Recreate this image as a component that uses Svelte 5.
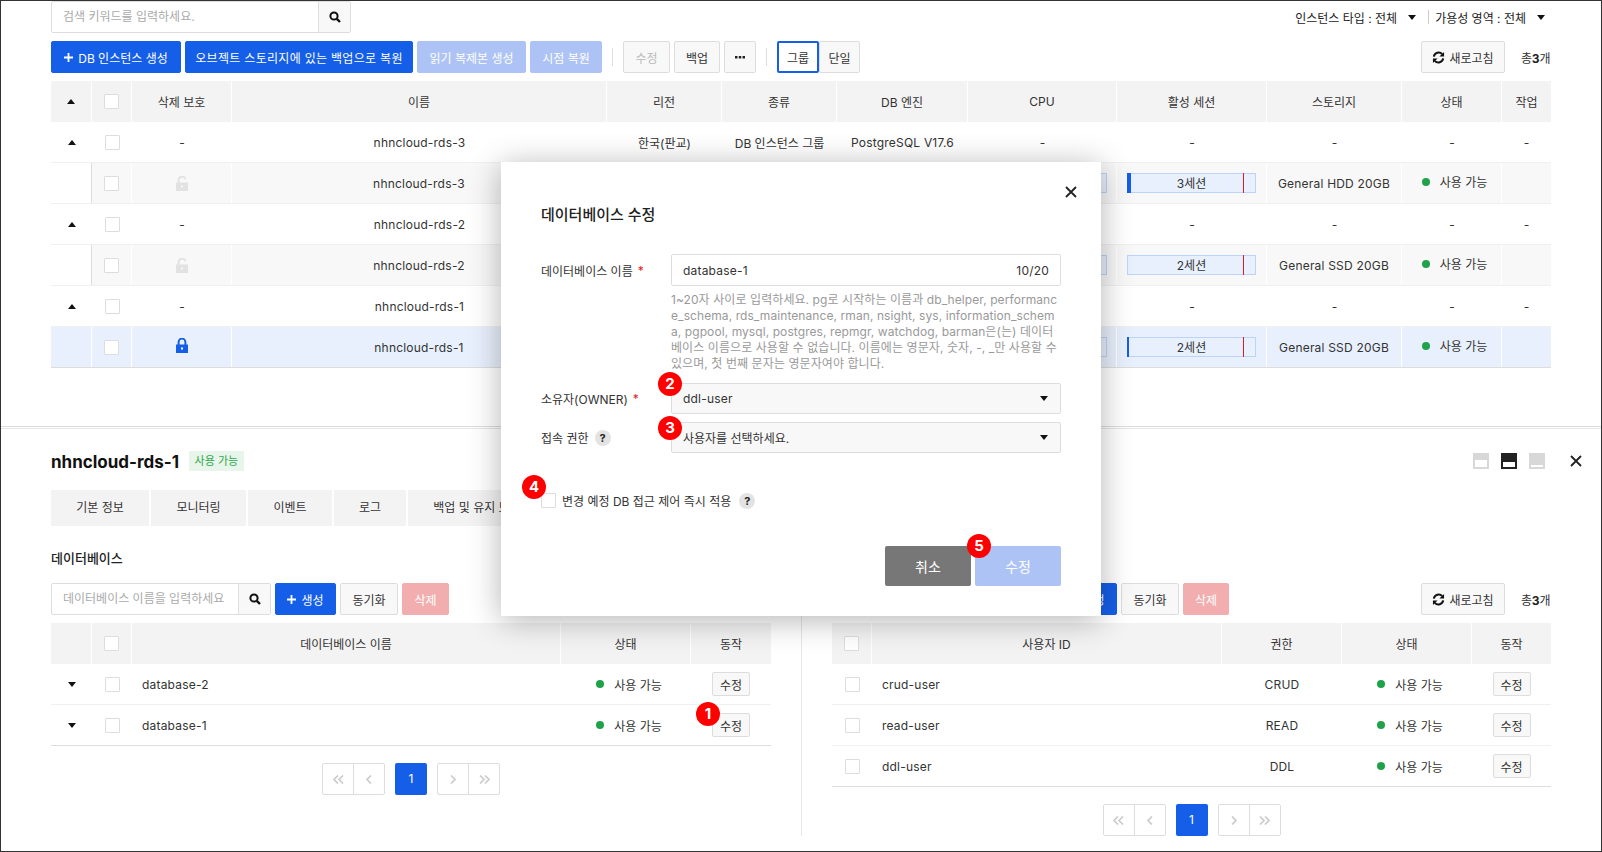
<script>
	const instances = [
		{ name: 'nhncloud-rds-3', disk: 'General HDD 20GB', cpu: 12, used: 4, sessions: '3세션', selected: false },
		{ name: 'nhncloud-rds-2', disk: 'General SSD 20GB', cpu: 8, used: 0, sessions: '2세션', selected: false },
		{ name: 'nhncloud-rds-1', disk: 'General SSD 20GB', cpu: 10, used: 2, sessions: '2세션', selected: true }
	]
	const tabs = ['기본 정보', '모니터링', '이벤트', '로그', '백업 및 유지 보수']
	const databases = ['database-2', 'database-1']
	const users = [
		{ id: 'crud-user', role: 'CRUD' },
		{ id: 'read-user', role: 'READ' },
		{ id: 'ddl-user', role: 'DDL' }
	]
	const marks = [
		{ n: 1, x: 708, y: 714 },
		{ n: 2, x: 670, y: 384 },
		{ n: 3, x: 670, y: 428 },
		{ n: 4, x: 534, y: 487 },
		{ n: 5, x: 979, y: 546 }
	]
</script>

{#snippet search()}
	<svg width="12" height="12" viewBox="0 0 12 12" fill="none">
		<circle cx="5" cy="5" r="3.6" stroke="#111" stroke-width="2" />
		<path d="M7.8 7.8 11 11" stroke="#111" stroke-width="2.4" />
	</svg>
{/snippet}

{#snippet refresh()}
	<svg width="13" height="13" viewBox="0 0 14 14" fill="none">
		<path d="M2 6a5.2 5.2 0 0 1 9-2.6" stroke="#111" stroke-width="2.2" />
		<path d="M13 1v5H8z" fill="#111" />
		<path d="M12 8a5.2 5.2 0 0 1-9 2.6" stroke="#111" stroke-width="2.2" />
		<path d="M1 13V8h5z" fill="#111" />
	</svg>
{/snippet}

{#snippet plus()}
	<svg width="9" height="9" viewBox="0 0 9 9"><path d="M3.6 0h1.8v3.600H9v1.800H5.400V9H3.600V5.400H0V3.600h3.600z" fill="#fff" /></svg>
{/snippet}

{#snippet close()}
	<svg width="12" height="12" viewBox="0 0 12 12"><path d="M1 1l10 10M11 1 1 11" stroke="#222" stroke-width="1.8" /></svg>
{/snippet}

{#snippet lock(open)}
	<svg width="12" height="15" viewBox="0 0 12 15" fill="none">
		{#if open}
			<path d="M2.600 7V4a3.400 3.400 0 0 1 6.700-.8" stroke="#e2e2e2" stroke-width="2" />
			<path d="M0 6.500h12V15H0z" fill="#e2e2e2" />
			<path d="M5 9.500h2v2H5z" fill="#f8f8f8" />
		{:else}
			<path d="M2.600 7V4a3.400 3.400 0 0 1 6.800 0v3" stroke="#155ee8" stroke-width="2" />
			<path d="M0 6.500h12V15H0z" fill="#155ee8" />
			<path d="M5 9.500h2v2H5z" fill="#fff" />
		{/if}
	</svg>
{/snippet}

{#snippet pager()}
	<div class="pager">
		<div class="pgroup">
			<span class="pbtn"><svg width="11" height="9" viewBox="0 0 11 9" fill="none"><path d="M5 .5 1 4.500l4 4M10 .5 6 4.500l4 4" stroke="#ccc" stroke-width="1.700" /></svg></span>
			<span class="pbtn"><svg width="6" height="9" viewBox="0 0 6 9" fill="none"><path d="M5 .5 1 4.500l4 4" stroke="#ccc" stroke-width="1.700" /></svg></span>
		</div>
		<span class="pcur">1</span>
		<div class="pgroup">
			<span class="pbtn"><svg width="6" height="9" viewBox="0 0 6 9" fill="none"><path d="M1 .5l4 4-4 4" stroke="#ccc" stroke-width="1.700" /></svg></span>
			<span class="pbtn"><svg width="11" height="9" viewBox="0 0 11 9" fill="none"><path d="M1 .5l4 4-4 4M6 .5l4 4-4 4" stroke="#ccc" stroke-width="1.700" /></svg></span>
		</div>
	</div>
{/snippet}

{#snippet status()}
	<span class="status"><i></i>사용 가능</span>
{/snippet}

{#snippet bar(used, label)}
	<div class="bar">
		{#if used}<i style="width: {used}px"></i>{/if}
		<b></b>
		{label}
	</div>
{/snippet}

<div class="page">
	<section class="top">
		<div class="filters">
			<div class="search wide">
				<span class="ph">검색 키워드를 입력하세요.</span>
				<span class="sbtn">{@render search()}</span>
			</div>
			<div class="selects">
				<span class="flt">인스턴스 타입 : 전체</span><i class="down flt-arrow"></i>
				<span class="flt-sep"></span>
				<span class="flt">가용성 영역 : 전체</span><i class="down flt-arrow"></i>
			</div>
		</div>

		<div class="toolbar">
			<button class="btn blue w130">{@render plus()} DB 인스턴스 생성</button>
			<button class="btn blue w228">오브젝트 스토리지에 있는 백업으로 복원</button>
			<button class="btn faded w109">읽기 복제본 생성</button>
			<button class="btn faded w72">시점 복원</button>
			<span class="vsep"></span>
			<button class="btn off w47">수정</button>
			<button class="btn w46">백업</button>
			<button class="btn w32" aria-label="더 보기">
				<svg width="10" height="3" viewBox="0 0 10 3"><path d="M0 0h2.500v2.500H0zM3.750 0h2.500v2.500h-2.500zM7.500 0H10v2.500H7.500z" fill="#222" /></svg>
			</button>
			<span class="vsep"></span>
			<button class="btn on w42">그룹</button>
			<button class="btn w41">단일</button>
			<button class="btn refresh">{@render refresh()} 새로고침</button>
			<span class="total">총<b>3</b>개</span>
		</div>

		<div class="table main">
			<div class="row head">
				<div class="cell"><i class="up"></i></div>
				<div class="cell"><span class="check"></span></div>
				<div class="cell">삭제 보호</div>
				<div class="cell">이름</div>
				<div class="cell">리전</div>
				<div class="cell">종류</div>
				<div class="cell">DB 엔진</div>
				<div class="cell">CPU</div>
				<div class="cell">활성 세션</div>
				<div class="cell">스토리지</div>
				<div class="cell">상태</div>
				<div class="cell">작업</div>
			</div>
			{#each instances as inst}
				<div class="row">
					<div class="cell"><i class="up"></i></div>
					<div class="cell"><span class="check"></span></div>
					<div class="cell">-</div>
					<div class="cell lat">{inst.name}</div>
					<div class="cell">한국(판교)</div>
					<div class="cell">DB 인스턴스 그룹</div>
					<div class="cell lat">PostgreSQL V17.6</div>
					<div class="cell">-</div>
					<div class="cell">-</div>
					<div class="cell">-</div>
					<div class="cell">-</div>
					<div class="cell">-</div>
				</div>
				<div class="row child" class:selected={inst.selected}>
					<div class="cell"></div>
					<div class="cell"><span class="check"></span></div>
					<div class="cell" class:raised={inst.selected}>{@render lock(!inst.selected)}</div>
					<div class="cell lat">{inst.name}</div>
					<div class="cell">한국(판교)</div>
					<div class="cell">DB 인스턴스</div>
					<div class="cell lat">PostgreSQL V17.6</div>
					<div class="cell">{@render bar(inst.used, inst.cpu + '%')}</div>
					<div class="cell">{@render bar(inst.used, inst.sessions)}</div>
					<div class="cell lat">{inst.disk}</div>
					<div class="cell raised">{@render status()}</div>
					<div class="cell"></div>
				</div>
			{/each}
		</div>
	</section>

	<div class="split"></div>

	<section class="detail">
		<div class="detail-head">
			<h2>nhncloud-rds-1</h2>
			<span class="badge">사용 가능</span>
			<div class="views">
				<span class="view v1"></span>
				<span class="view v2"></span>
				<span class="view v3"></span>
				<span class="detail-close">{@render close()}</span>
			</div>
		</div>

		<div class="tabs">
			{#each tabs as tab, i}
				<span class="tab t{i}">{tab}</span>
			{/each}
		</div>

		<div class="columns">
			<div class="col left">
				<h3>데이터베이스</h3>
				<div class="toolbar sub">
					<div class="search boxed">
						<span class="ph">데이터베이스 이름을 입력하세요</span>
						<span class="sbtn">{@render search()}</span>
					</div>
					<button class="btn blue w61">{@render plus()} 생성</button>
					<button class="btn w58">동기화</button>
					<button class="btn red w47">삭제</button>
				</div>
				<div class="table dbs">
					<div class="row head">
						<div class="cell"></div>
						<div class="cell"><span class="check"></span></div>
						<div class="cell">데이터베이스 이름</div>
						<div class="cell">상태</div>
						<div class="cell">동작</div>
					</div>
					{#each databases as db}
						<div class="row">
							<div class="cell"><i class="down"></i></div>
							<div class="cell"><span class="check"></span></div>
							<div class="cell start lat">{db}</div>
							<div class="cell">{@render status()}</div>
							<div class="cell"><button class="btn small">수정</button></div>
						</div>
					{/each}
				</div>
				{@render pager()}
			</div>

			<div class="col right">
				<h3>사용자</h3>
				<div class="toolbar sub">
					<div class="search boxed">
						<span class="ph">사용자 ID를 입력하세요</span>
						<span class="sbtn">{@render search()}</span>
					</div>
					<button class="btn blue w61">{@render plus()} 생성</button>
					<button class="btn w58">동기화</button>
					<button class="btn red w46">삭제</button>
					<button class="btn refresh">{@render refresh()} 새로고침</button>
					<span class="total">총<b>3</b>개</span>
				</div>
				<div class="table usrs">
					<div class="row head">
						<div class="cell"><span class="check"></span></div>
						<div class="cell">사용자 ID</div>
						<div class="cell">권한</div>
						<div class="cell">상태</div>
						<div class="cell">동작</div>
					</div>
					{#each users as user}
						<div class="row">
							<div class="cell"><span class="check"></span></div>
							<div class="cell start lat">{user.id}</div>
							<div class="cell lat">{user.role}</div>
							<div class="cell">{@render status()}</div>
							<div class="cell"><button class="btn small">수정</button></div>
						</div>
					{/each}
				</div>
				{@render pager()}
			</div>
		</div>
	</section>

	<div class="modal">
		<span class="modal-close">{@render close()}</span>
		<h1>데이터베이스 수정</h1>
		<div class="form">
			<div class="lbl first">데이터베이스 이름 <em>*</em></div>
			<div>
				<div class="input lat">
					<span>database-1</span>
					<span>10/20</span>
				</div>
				<p class="help">
					1~20자 사이로 입력하세요. pg로 시작하는 이름과 db_helper, performanc<br />
					e_schema, rds_maintenance, rman, nsight, sys, information_schem<br />
					a, pgpool, mysql, postgres, repmgr, watchdog, barman은(는) 데이터<br />
					베이스 이름으로 사용할 수 없습니다. 이름에는 영문자, 숫자, -, _만 사용할 수<br />
					있으며, 첫 번째 문자는 영문자여야 합니다.
				</p>
			</div>
			<div class="lbl">소유자(OWNER) <em>*</em></div>
			<div class="select lat"><span>ddl-user</span><i class="down"></i></div>
			<div class="lbl">접속 권한 <span class="q">?</span></div>
			<div class="select"><span>사용자를 선택하세요.</span><i class="down"></i></div>
		</div>
		<div class="agree">
			<span class="check"></span>
			<span>변경 예정 DB 접근 제어 즉시 적용</span>
			<span class="q">?</span>
		</div>
		<div class="actions">
			<button class="mbtn cancel">취소</button>
			<button class="mbtn save">수정</button>
		</div>
	</div>

	{#each marks as m}
		<span class="mark" style="left: {m.x - 12}px; top: {m.y - 12}px">{m.n}</span>
	{/each}
</div>

<style>
	:global(body) {
		margin: 0;
		background: #fff;
	}
	.page {
		position: relative;
		box-sizing: border-box;
		width: 1602px;
		height: 852px;
		border: 1px solid #333;
		overflow: hidden;
		font-family: Inter, 'Noto Sans CJK KR', sans-serif;
		font-size: 12px;
		color: #333;
	}
	.lat {
		letter-spacing: 0.2px;
	}
	.top {
		height: 425px;
		padding: 0 50px;
		box-sizing: border-box;
	}
	.filters {
		display: flex;
		justify-content: space-between;
		align-items: center;
		height: 32px;
	}
	.search {
		display: flex;
		box-sizing: border-box;
		height: 32px;
		border: 1px solid #ddd;
		border-radius: 2px;
		background: #fff;
	}
	.wide {
		width: 300px;
	}
	.boxed {
		width: 220px;
	}
	.ph {
		flex: 1;
		padding-left: 11px;
		line-height: 30px;
		color: #aaa;
		overflow: hidden;
		white-space: nowrap;
	}
	.sbtn {
		display: flex;
		align-items: center;
		justify-content: center;
		width: 31px;
		border-left: 1px solid #ddd;
		background: #f8f8f8;
	}
	.selects {
		display: flex;
		align-items: center;
		padding-right: 6px;
	}
	.flt {
		color: #222;
	}
	.flt-arrow {
		margin-left: 11px;
	}
	.flt-sep {
		width: 1px;
		height: 14px;
		margin: 0 6px 0 12px;
		background: #ccc;
	}
	.up,
	.down {
		display: block;
		width: 0;
		height: 0;
		border-left: 4px solid transparent;
		border-right: 4px solid transparent;
	}
	.up {
		border-bottom: 5px solid #111;
	}
	.down {
		border-top: 5px solid #111;
	}
	.toolbar {
		display: flex;
		align-items: center;
		gap: 4px;
		height: 32px;
		margin-top: 8px;
	}
	.btn {
		display: inline-flex;
		align-items: center;
		justify-content: center;
		gap: 5px;
		box-sizing: border-box;
		height: 32px;
		padding: 0;
		border: 1px solid #ddd;
		border-radius: 2px;
		background: #f8f8f8;
		color: #333;
		font: inherit;
		white-space: nowrap;
	}
	.blue {
		border-color: #155ee8;
		background: #155ee8;
		color: #fff;
	}
	.faded {
		border-color: #aec3f5;
		background: #aec3f5;
		color: #fff;
	}
	.red {
		border-color: #f2aeae;
		background: #f2aeae;
		color: #fff;
	}
	.off {
		color: #bbb;
	}
	.on {
		border: 2px solid #155ee8;
		background: #fff;
		margin-right: -4px;
	}
	.w130 { width: 130px; }
	.w228 { width: 228px; letter-spacing: 0.3px; }
	.w109 { width: 109px; }
	.w72 { width: 72px; }
	.w47 { width: 47px; }
	.w46 { width: 46px; }
	.w32 { width: 32px; }
	.w42 { width: 42px; }
	.w41 { width: 41px; }
	.w61 { width: 61px; }
	.w58 { width: 58px; }
	.vsep {
		width: 1px;
		height: 18px;
		margin: 0 6px;
		background: #ddd;
	}
	.refresh {
		width: 84px;
		margin-left: auto;
		background: #f8f8f8;
		gap: 4px;
	}
	.total {
		margin-left: 12px;
		width: 30px;
		color: #333;
		white-space: nowrap;
		letter-spacing: -0.2px;
	}
	.total b {
		color: #222;
	}
	.table {
		margin-top: 8px;
	}
	.row {
		display: grid;
		box-sizing: border-box;
		height: 41px;
		border-bottom: 1px solid #f0f0f0;
	}
	.main .row {
		grid-template-columns: 41px 40px 100px 375px 115px 115px 131px 149px 150px 135px 100px 49px;
	}
	.dbs .row {
		grid-template-columns: 41px 40px 429px 130px 80px;
	}
	.usrs .row {
		grid-template-columns: 40px 350px 120px 130px 79px;
	}
	.cell {
		display: flex;
		align-items: center;
		justify-content: center;
		box-sizing: border-box;
		min-width: 0;
		white-space: nowrap;
	}
	.start {
		justify-content: flex-start;
		padding-left: 10px;
	}
	.head {
		border-bottom: 0;
		background: #f3f3f3;
	}
	.head .cell:not(:last-child),
	.child .cell:not(:last-child) {
		border-right: 1px solid #fff;
	}
	.child {
		background: #f8f8f8;
	}
	.child .cell:first-child {
		background: #fff;
		border-right-color: #ddd;
	}
	.child.selected,
	.child.selected .cell:first-child {
		background: #e8f0fd;
	}
	.child.selected .cell:first-child {
		border-right-color: #fff;
	}
	.row.selected {
		border-bottom-color: #ddd;
	}
	.table .row:last-child {
		border-bottom-color: #ddd;
	}
	.raised {
		padding-bottom: 3px;
	}
	.check {
		display: block;
		box-sizing: border-box;
		width: 15px;
		height: 15px;
		border: 1px solid #ddd;
		border-radius: 1px;
		background: #fff;
	}
	.status {
		display: inline-flex;
		align-items: center;
		gap: 10px;
		padding-left: 6px;
	}
	.status i {
		width: 8px;
		height: 8px;
		border-radius: 50%;
		background: #1fa24a;
	}
	.bar {
		position: relative;
		box-sizing: border-box;
		width: 129px;
		height: 20px;
		border: 1px solid #bcd4f8;
		background: #e8f0fd;
		line-height: 19px;
		text-align: center;
	}
	.bar i {
		position: absolute;
		left: -1px;
		top: -1px;
		bottom: -1px;
		background: #155ee8;
	}
	.bar b {
		position: absolute;
		left: 115px;
		top: -1px;
		bottom: -1px;
		width: 1px;
		background: #e01b24;
	}
	.split {
		box-sizing: border-box;
		height: 3px;
		border-top: 1px solid #ddd;
		border-bottom: 1px solid #e6e6e6;
	}
	.detail {
		height: 422px;
	}
	.detail-head {
		display: flex;
		align-items: center;
		height: 20px;
		margin-top: 22px;
		padding: 0 19px 0 50px;
	}
	h2 {
		margin: 2px 10px 0 0;
		font-size: 17px;
		font-weight: 700;
		color: #111;
	}
	.badge {
		padding: 0 5.5px;
		font-size: 11px;
		line-height: 20px;
		background: #e8f5ea;
		color: #2fa84f;
	}
	.views {
		display: flex;
		align-items: center;
		gap: 12px;
		margin-left: auto;
	}
	.view {
		position: relative;
		width: 16px;
		height: 16px;
		background: #d8d8d8;
	}
	.view::after {
		content: '';
		position: absolute;
		left: 2px;
		right: 2px;
		background: #fff;
	}
	.v1::after {
		top: 7px;
		bottom: 2px;
	}
	.v2 {
		background: #222;
	}
	.v2::after {
		top: 9px;
		bottom: 2px;
	}
	.v3::after {
		top: 12px;
		bottom: 2px;
	}
	.detail-close {
		display: flex;
		margin-left: 13px;
	}
	.tabs {
		display: flex;
		gap: 2px;
		margin-top: 19px;
		padding-left: 50px;
	}
	.tab {
		box-sizing: border-box;
		height: 36px;
		line-height: 36px;
		text-align: center;
		background: #f3f3f3;
		font-size: 12px;
	}
	.t0 { width: 98px; }
	.t1 { width: 95px; }
	.t2 { width: 84px; }
	.t3 { width: 72px; }
	.t4 { width: 138px; }
	.columns {
		display: grid;
		grid-template-columns: 800px 800px;
		align-items: start;
	}
	.left {
		padding: 0 30px 0 50px;
	}
	.right {
		box-sizing: border-box;
		width: 800px;
		padding: 0 50px 0 30px;
		border-left: 1px solid #e6e6e6;
	}
	h3 {
		margin: 22px 0 0;
		font-size: 13px;
		font-weight: 500;
		line-height: 20px;
		color: #222;
	}
	.sub {
		margin-top: 15px;
	}
	.small {
		width: 38px;
		height: 24px;
	}
	.pager {
		display: flex;
		justify-content: center;
		gap: 10px;
		margin-top: 17px;
	}
	.pgroup {
		display: flex;
		box-sizing: border-box;
		width: 63px;
		border: 1px solid #ddd;
		border-radius: 2px;
	}
	.pbtn {
		display: flex;
		flex: 1;
		align-items: center;
		justify-content: center;
		height: 30px;
	}
	.pbtn + .pbtn {
		border-left: 1px solid #ddd;
	}
	.pcur {
		width: 32px;
		height: 32px;
		border-radius: 2px;
		background: #155ee8;
		color: #fff;
		line-height: 32px;
		text-align: center;
	}
	.modal {
		position: absolute;
		left: 500px;
		top: 161px;
		box-sizing: border-box;
		width: 600px;
		height: 454px;
		padding: 43px 40px 30px;
		background: #fff;
		box-shadow: 0 4px 30px rgba(0, 0, 0, 0.3);
	}
	.modal-close {
		position: absolute;
		right: 24px;
		top: 24px;
		display: flex;
	}
	h1 {
		margin: 0;
		font-size: 15px;
		font-weight: 500;
		line-height: 20px;
		color: #222;
	}
	.form {
		display: grid;
		grid-template-columns: 130px 390px;
		row-gap: 8px;
		margin-top: 29px;
	}
	.lbl {
		display: flex;
		align-items: center;
		gap: 5px;
		height: 31px;
		color: #333;
	}
	.lbl em {
		font-style: normal;
		color: #e01b24;
	}
	.lbl .q {
		margin-left: 1px;
	}
	.first {
		height: 32px;
	}
	.input,
	.select {
		display: flex;
		align-items: center;
		justify-content: space-between;
		box-sizing: border-box;
		border: 1px solid #ddd;
		border-radius: 2px;
		padding: 0 11px;
	}
	.input {
		height: 32px;
	}
	.select {
		height: 31px;
		background: #f8f8f8;
	}
	.select .down {
		margin-right: 1px;
	}
	.help {
		margin: 6px 0 3px;
		font-size: 12px;
		letter-spacing: 0.08px;
		line-height: 16px;
		color: #999;
		white-space: nowrap;
	}
	.q {
		display: inline-block;
		width: 16px;
		height: 16px;
		border-radius: 50%;
		background: #e3e3e3;
		font-size: 11px;
		font-weight: 700;
		line-height: 16px;
		text-align: center;
		color: #222;
	}
	.agree {
		display: flex;
		align-items: center;
		gap: 6px;
		height: 15px;
		margin-top: 40px;
	}
	.agree .q {
		margin-left: 2px;
	}
	.actions {
		display: flex;
		justify-content: flex-end;
		gap: 4px;
		margin-top: 38px;
	}
	.mbtn {
		width: 86px;
		height: 40px;
		border: 0;
		border-radius: 2px;
		color: #fff;
		font: inherit;
		font-size: 14px;
	}
	.cancel {
		background: #777;
	}
	.save {
		background: #aec3f5;
	}
	.mark {
		position: absolute;
		width: 24px;
		height: 24px;
		margin: -1px 0 0 -1px;
		border-radius: 50%;
		background: #f00;
		color: #fff;
		font-size: 15px;
		font-weight: 700;
		line-height: 24px;
		text-align: center;
	}
</style>
